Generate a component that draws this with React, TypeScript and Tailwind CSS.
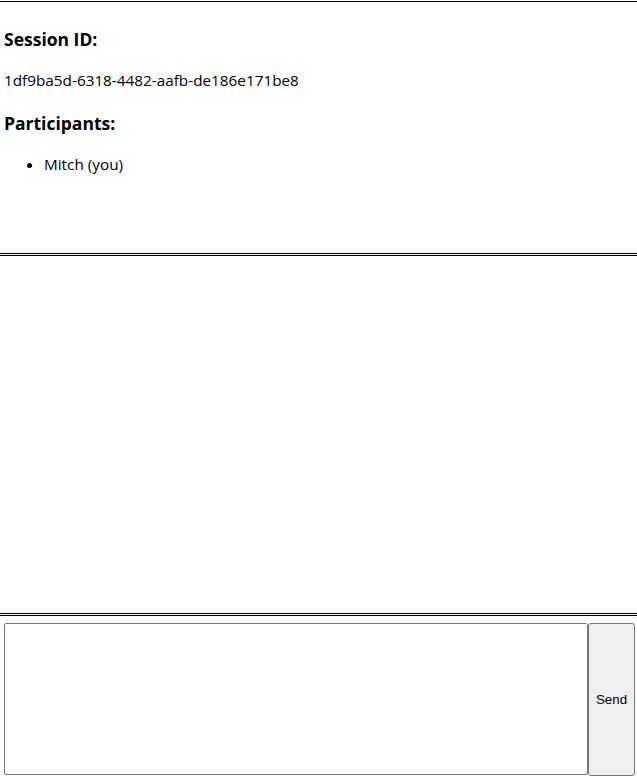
import { useState } from 'react'

export default function App() {
  const [draft, setDraft] = useState('')

  return (
    <div className="pt-px h-[781px] bg-white text-black font-['Open_Sans','Noto_Sans',sans-serif]">
      {/* session info */}
      <section className="h-[253px] border-y border-black px-1 pt-[7px]">
        <h3 className="mt-[18px] text-[17.5px] leading-[25px] font-bold">Session ID:</h3>
        <p className="mt-[18px] text-[15.3px] leading-[21px]">1df9ba5d-6318-4482-aafb-de186e171be8</p>
        <h3 className="mt-[20px] text-[17.5px] leading-[25px] font-bold">Participants:</h3>
        <ul className="mt-[18px] pl-10 list-disc text-[15.3px] leading-[21px]">
          <li>Mitch (you)</li>
        </ul>
      </section>

      {/* messages */}
      <section className="mt-px h-[359px] border-y border-black" />

      {/* composer */}
      <section className="mt-px border-t border-black pl-1 pr-[2px] pt-[7px] flex">
        <textarea
          value={draft}
          onChange={(e) => setDraft(e.target.value)}
          className="w-[584px] h-[152px] border border-[#767676] rounded-[2px] resize-none outline-none"
        />
        <button className="w-[47px] h-[153px] border border-[#767676] rounded-[3px] bg-[#efefef] text-[13.33px] font-['Liberation_Sans',Arial,sans-serif]">
          Send
        </button>
      </section>
    </div>
  )
}
